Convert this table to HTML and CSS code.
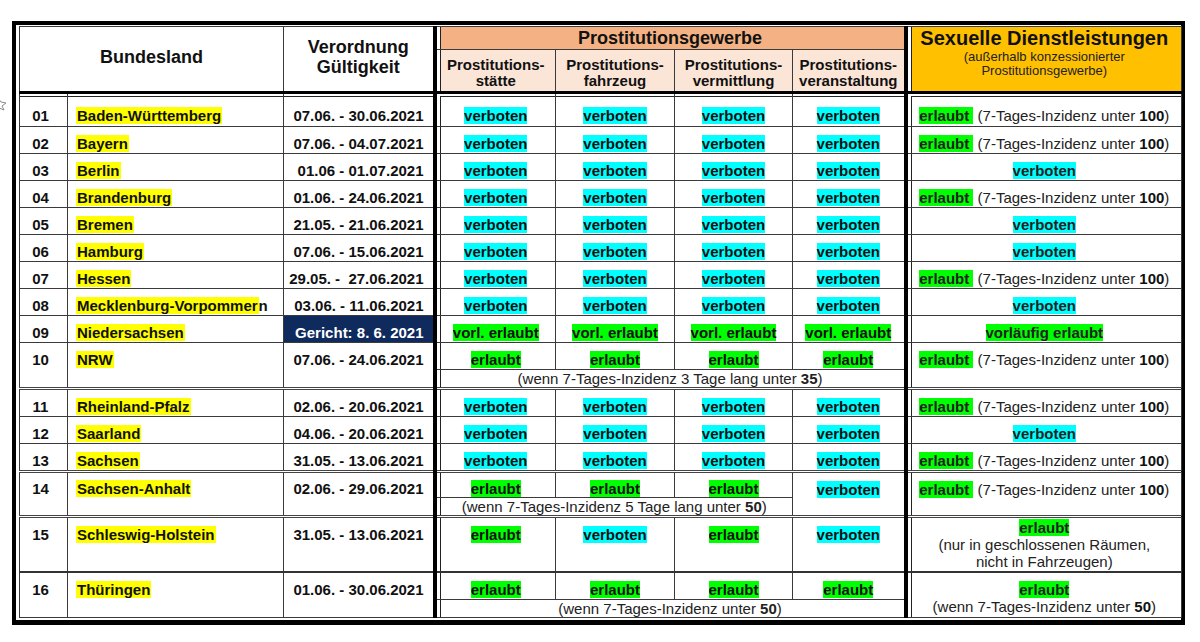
FILE: index.html
```html
<!DOCTYPE html>
<html lang="de">
<head>
    <meta charset="UTF-8">
    <meta name="viewport" content="width=device-width, initial-scale=1.0">
    <title>Prostitution – Regelungen der Bundesländer</title>
    <link rel="stylesheet" href="styles.css">
</head>
<body>
    <svg class="side-mark" width="8" height="14" viewBox="0 0 8 14">
        <path d="M-2 1 L1 5 L6 6 L2 9 L4 13 L-1 11" fill="none" stroke="#8a8a8a" stroke-width="1"/>
    </svg>

    <div class="sheet">
        <table class="rules">
            <colgroup>
                <col class="c-nr"><col class="c-land"><col class="c-date">
                <col class="c-p1"><col class="c-p2"><col class="c-p3"><col class="c-p4">
                <col class="c-sd">
            </colgroup>
            <thead>
                <tr class="h-top">
                    <th colspan="2" rowspan="2" class="h-land">Bundesland</th>
                    <th rowspan="2" class="h-date sep-r">Verordnung<br>Gültigkeit</th>
                    <th colspan="4" class="h-group sep-l sep-r">Prostitutionsgewerbe</th>
                    <th rowspan="2" class="h-sd sep-l">Sexuelle Dienstleistungen<small>(außerhalb konzessionierter<br>Prostitutionsgewerbe)</small></th>
                </tr>
                <tr class="h-sub">
                    <th class="sep-l">Prostitutions-<br>stätte</th>
                    <th>Prostitutions-<br>fahrzeug</th>
                    <th>Prostitutions-<br>vermittlung</th>
                    <th class="sep-r">Prostitutions-<br>veranstaltung</th>
                </tr>
            </thead>
            <tbody>
                <tr class="first">
                    <td class="nr">01</td>
                    <td class="land"><span class="y">Baden-Württemberg</span></td>
                    <td class="date sep-r">07.06. - 30.06.2021</td>
                    <td class="sep-l"><span class="v">verboten</span></td>
                    <td><span class="v">verboten</span></td>
                    <td><span class="v">verboten</span></td>
                    <td class="sep-r"><span class="v">verboten</span></td>
                    <td class="sd sep-l"><span class="e">erlaubt&nbsp;</span> (7-Tages-Inzidenz unter <b>100</b>)</td>
                </tr>
                <tr>
                    <td class="nr">02</td>
                    <td class="land"><span class="y">Bayern</span></td>
                    <td class="date sep-r">07.06. - 04.07.2021</td>
                    <td class="sep-l"><span class="v">verboten</span></td>
                    <td><span class="v">verboten</span></td>
                    <td><span class="v">verboten</span></td>
                    <td class="sep-r"><span class="v">verboten</span></td>
                    <td class="sd sep-l"><span class="e">erlaubt&nbsp;</span> (7-Tages-Inzidenz unter <b>100</b>)</td>
                </tr>
                <tr>
                    <td class="nr">03</td>
                    <td class="land"><span class="y">Berlin</span></td>
                    <td class="date sep-r">01.06 - 01.07.2021</td>
                    <td class="sep-l"><span class="v">verboten</span></td>
                    <td><span class="v">verboten</span></td>
                    <td><span class="v">verboten</span></td>
                    <td class="sep-r"><span class="v">verboten</span></td>
                    <td class="sd sep-l"><span class="v">verboten</span></td>
                </tr>
                <tr>
                    <td class="nr">04</td>
                    <td class="land"><span class="y">Brandenburg</span></td>
                    <td class="date sep-r">01.06. - 24.06.2021</td>
                    <td class="sep-l"><span class="v">verboten</span></td>
                    <td><span class="v">verboten</span></td>
                    <td><span class="v">verboten</span></td>
                    <td class="sep-r"><span class="v">verboten</span></td>
                    <td class="sd sep-l"><span class="e">erlaubt&nbsp;</span> (7-Tages-Inzidenz unter <b>100</b>)</td>
                </tr>
                <tr>
                    <td class="nr">05</td>
                    <td class="land"><span class="y">Bremen</span></td>
                    <td class="date sep-r">21.05. - 21.06.2021</td>
                    <td class="sep-l"><span class="v">verboten</span></td>
                    <td><span class="v">verboten</span></td>
                    <td><span class="v">verboten</span></td>
                    <td class="sep-r"><span class="v">verboten</span></td>
                    <td class="sd sep-l"><span class="v">verboten</span></td>
                </tr>
                <tr>
                    <td class="nr">06</td>
                    <td class="land"><span class="y">Hamburg</span></td>
                    <td class="date sep-r">07.06. - 15.06.2021</td>
                    <td class="sep-l"><span class="v">verboten</span></td>
                    <td><span class="v">verboten</span></td>
                    <td><span class="v">verboten</span></td>
                    <td class="sep-r"><span class="v">verboten</span></td>
                    <td class="sd sep-l"><span class="v">verboten</span></td>
                </tr>
                <tr>
                    <td class="nr">07</td>
                    <td class="land"><span class="y">Hessen</span></td>
                    <td class="date sep-r">29.05. -&nbsp; 27.06.2021</td>
                    <td class="sep-l"><span class="v">verboten</span></td>
                    <td><span class="v">verboten</span></td>
                    <td><span class="v">verboten</span></td>
                    <td class="sep-r"><span class="v">verboten</span></td>
                    <td class="sd sep-l"><span class="e">erlaubt&nbsp;</span> (7-Tages-Inzidenz unter <b>100</b>)</td>
                </tr>
                <tr>
                    <td class="nr">08</td>
                    <td class="land"><span class="y">Mecklenburg-Vorpommer</span>n</td>
                    <td class="date sep-r">03.06. - 11.06.2021</td>
                    <td class="sep-l"><span class="v">verboten</span></td>
                    <td><span class="v">verboten</span></td>
                    <td><span class="v">verboten</span></td>
                    <td class="sep-r"><span class="v">verboten</span></td>
                    <td class="sd sep-l"><span class="v">verboten</span></td>
                </tr>
                <tr>
                    <td class="nr">09</td>
                    <td class="land"><span class="y">Niedersachsen</span></td>
                    <td class="date court sep-r">Gericht: 8. 6. 2021</td>
                    <td class="sep-l"><span class="e">vorl. erlaubt</span></td>
                    <td><span class="e">vorl. erlaubt</span></td>
                    <td><span class="e">vorl. erlaubt</span></td>
                    <td class="sep-r"><span class="e">vorl. erlaubt</span></td>
                    <td class="sd sep-l"><span class="e">vorläufig erlaubt</span></td>
                </tr>
                <tr>
                    <td class="nr" rowspan="2">10</td>
                    <td class="land" rowspan="2"><span class="y">NRW</span></td>
                    <td class="date sep-r" rowspan="2">07.06. - 24.06.2021</td>
                    <td class="sep-l"><span class="e">erlaubt</span></td>
                    <td><span class="e">erlaubt</span></td>
                    <td><span class="e">erlaubt</span></td>
                    <td class="sep-r"><span class="e">erlaubt</span></td>
                    <td class="sd sep-l" rowspan="2"><span class="e">erlaubt&nbsp;</span> (7-Tages-Inzidenz unter <b>100</b>)</td>
                </tr>
                <tr class="sub">
                    <td colspan="4" class="note sep-l sep-r">(wenn 7-Tages-Inzidenz 3 Tage lang unter <b>35</b>)</td>
                </tr>
                <tr class="dbl">
                    <td class="nr">11</td>
                    <td class="land"><span class="y">Rheinland-Pfalz</span></td>
                    <td class="date sep-r">02.06. - 20.06.2021</td>
                    <td class="sep-l"><span class="v">verboten</span></td>
                    <td><span class="v">verboten</span></td>
                    <td><span class="v">verboten</span></td>
                    <td class="sep-r"><span class="v">verboten</span></td>
                    <td class="sd sep-l"><span class="e">erlaubt&nbsp;</span> (7-Tages-Inzidenz unter <b>100</b>)</td>
                </tr>
                <tr>
                    <td class="nr">12</td>
                    <td class="land"><span class="y">Saarland</span></td>
                    <td class="date sep-r">04.06. - 20.06.2021</td>
                    <td class="sep-l"><span class="v">verboten</span></td>
                    <td><span class="v">verboten</span></td>
                    <td><span class="v">verboten</span></td>
                    <td class="sep-r"><span class="v">verboten</span></td>
                    <td class="sd sep-l"><span class="v">verboten</span></td>
                </tr>
                <tr>
                    <td class="nr">13</td>
                    <td class="land"><span class="y">Sachsen</span></td>
                    <td class="date sep-r">31.05. - 13.06.2021</td>
                    <td class="sep-l"><span class="v">verboten</span></td>
                    <td><span class="v">verboten</span></td>
                    <td><span class="v">verboten</span></td>
                    <td class="sep-r"><span class="v">verboten</span></td>
                    <td class="sd sep-l"><span class="e">erlaubt&nbsp;</span> (7-Tages-Inzidenz unter <b>100</b>)</td>
                </tr>
                <tr class="dbl tight">
                    <td class="nr" rowspan="2">14</td>
                    <td class="land" rowspan="2"><span class="y">Sachsen-Anhalt</span></td>
                    <td class="date sep-r" rowspan="2">02.06. - 29.06.2021</td>
                    <td class="sep-l"><span class="e">erlaubt</span></td>
                    <td><span class="e">erlaubt</span></td>
                    <td><span class="e">erlaubt</span></td>
                    <td class="sep-r span" rowspan="2"><span class="v">verboten</span></td>
                    <td class="sd sep-l span" rowspan="2"><span class="e">erlaubt&nbsp;</span> (7-Tages-Inzidenz unter <b>100</b>)</td>
                </tr>
                <tr class="sub">
                    <td colspan="3" class="note sep-l">(wenn 7-Tages-Inzidenz 5 Tage lang unter <b>50</b>)</td>
                </tr>
                <tr class="dbl">
                    <td class="nr">15</td>
                    <td class="land"><span class="y">Schleswig-Holstein</span></td>
                    <td class="date sep-r">31.05. - 13.06.2021</td>
                    <td class="sep-l"><span class="e">erlaubt</span></td>
                    <td><span class="v">verboten</span></td>
                    <td><span class="e">erlaubt</span></td>
                    <td class="sep-r"><span class="v">verboten</span></td>
                    <td class="sd sep-l mid"><span class="e">erlaubt</span><br>(nur in geschlossenen Räumen,<br>nicht in Fahrzeugen)</td>
                </tr>
                <tr class="thick">
                    <td class="nr" rowspan="2">16</td>
                    <td class="land" rowspan="2"><span class="y">Thüringen</span></td>
                    <td class="date sep-r" rowspan="2">01.06. - 30.06.2021</td>
                    <td class="sep-l"><span class="e">erlaubt</span></td>
                    <td><span class="e">erlaubt</span></td>
                    <td><span class="e">erlaubt</span></td>
                    <td class="sep-r"><span class="e">erlaubt</span></td>
                    <td class="sd sep-l" rowspan="2"><span class="e">erlaubt</span><br>(wenn 7-Tages-Inzidenz unter <b>50</b>)</td>
                </tr>
                <tr class="sub">
                    <td colspan="4" class="note sep-l sep-r">(wenn 7-Tages-Inzidenz unter <b>50</b>)</td>
                </tr>
            </tbody>
        </table>
    </div>
</body>
</html>
```

FILE: styles.css
```css
* {
    box-sizing: border-box;
}

body {
    margin: 0;
    background: #fff;
    color: #111;
    font-family: "Liberation Sans", Arial, sans-serif;
}

.side-mark {
    position: absolute;
    left: 0;
    top: 97px;
}

.sheet {
    width: 1173px;
    margin: 21px 0 0 12px;
    border: 4px solid #000;
    border-bottom-width: 5px;
    padding: 1px 0 2px 3px;
}

.rules {
    width: 1162px;
    table-layout: fixed;
    border-collapse: collapse;
    border: 1px solid #222;
    font-size: 15px;
    line-height: 17px;
}

.c-nr { width: 48px; }
.c-land { width: 216px; }
.c-date { width: 151px; }
.c-p1 { width: 121px; }
.c-p2 { width: 119px; }
.c-p3 { width: 118px; }
.c-p4 { width: 113px; }
.c-sd { width: 276px; }

th, td {
    border: 1px solid #3a3a3a;
    padding: 8px 4px 1px;
    text-align: center;
    vertical-align: top;
    font-weight: bold;
}

/* doppelte Trennlinien zwischen den Blöcken */
.sep-r {
    border-right: 4px solid #000;
}

.sep-l {
    box-shadow: inset 3px 0 #fff, inset 4px 0 #222;
}

/* Kopf */
thead th {
    vertical-align: middle;
    padding: 0 4px;
}

.h-land,
.h-date {
    font-size: 18px;
    line-height: 20px;
    border-bottom: 3px solid #000;
    padding-bottom: 4px;
}

.h-group {
    background: #f4b183;
    font-size: 18px;
    line-height: 22px;
}

.h-sub th {
    background: #fbe5d6;
    font-size: 15px;
    line-height: 16px;
    padding: 7px 2px 2px;
    border-bottom: 3px solid #000;
}

.h-sd {
    background: #ffc000;
    font-size: 20px;
    line-height: 23px;
    border-bottom: 3px solid #000;
}

thead th.h-sd {
    vertical-align: top;
    padding: 0 4px;
}

.h-sd small {
    display: block;
    font-size: 13px;
    line-height: 14px;
    font-weight: normal;
    color: #222;
}

/* Körper */
.first td {
    padding-top: 13px;
    padding-bottom: 2px;
    box-shadow: inset 0 2px #fff, inset 0 3px #222;
}

.first td.sep-l {
    box-shadow: inset 3px 0 #fff, inset 0 2px #fff, inset 4px 0 #222, inset 0 3px #222;
}

.nr {
    padding-left: 0;
    padding-right: 6px;
}

.land {
    text-align: left;
    padding-left: 8px;
}

.date {
    text-align: right;
    padding-right: 9px;
}

.court {
    background: #0f2a5c;
    color: #fff;
}

.sd {
    font-weight: normal;
    color: #222;
}

.sd b {
    color: #111;
}

.mid {
    vertical-align: middle;
}

td.sd.mid {
    padding: 1px 4px;
}

.sub td {
    padding: 0 4px;
    line-height: 17px;
}

.note {
    font-weight: normal;
    color: #222;
}

.tight td {
    padding-top: 7px;
    padding-bottom: 0;
}

.tight td.span {
    padding-top: 8px;
}

.dbl > td {
    border-top: 3px double #444;
}

.thick > td {
    border-top: 2px solid #333;
}

/* Markierungen */
.y {
    background: #ffff00;
    font-weight: bold;
    padding: 0 1px;
}

.v {
    background: #00ffff;
    font-weight: bold;
}

.e {
    background: #00ff00;
    font-weight: bold;
}
```
